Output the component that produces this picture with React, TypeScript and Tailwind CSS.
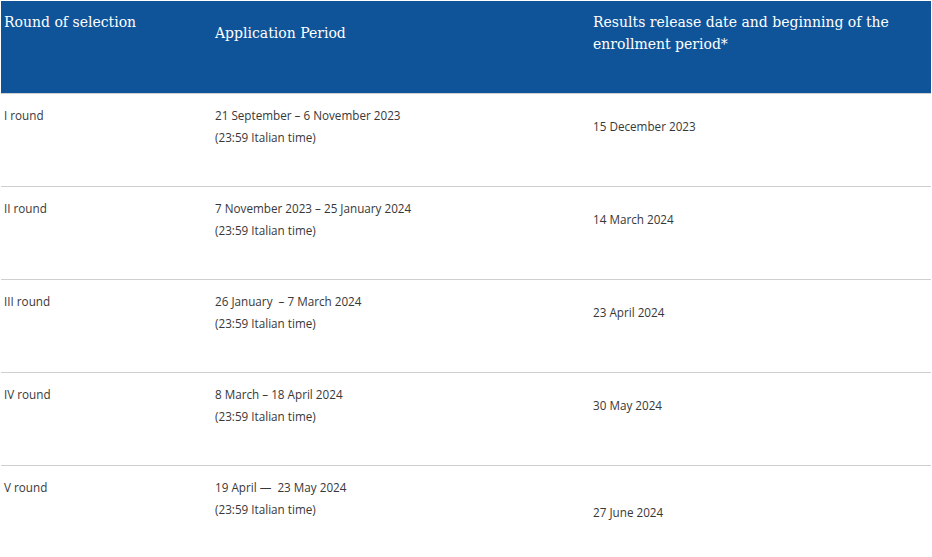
import React from 'react';

interface Round {
  name: string;
  period: string;
  note: string;
  release: string;
}

const rounds: Round[] = [
  { name: 'I round', period: '21 September – 6 November 2023', note: '(23:59 Italian time)', release: '15 December 2023' },
  { name: 'II round', period: '7 November 2023 – 25 January 2024', note: '(23:59 Italian time)', release: '14 March 2024' },
  { name: 'III round', period: '26 January  – 7 March 2024', note: '(23:59 Italian time)', release: '23 April 2024' },
  { name: 'IV round', period: '8 March – 18 April 2024', note: '(23:59 Italian time)', release: '30 May 2024' },
  { name: 'V round', period: '19 April —  23 May 2024', note: '(23:59 Italian time)', release: '27 June 2024' },
];

const serif = { fontFamily: 'Georgia, "DejaVu Serif", serif' };

const App = () => {
  return (
    <div className="bg-white p-px">
      {/* Header */}
      <div
        className="grid h-[93px] grid-cols-[211px_378px_1fr] border-b border-[#cfcfcf] bg-[#0f5499] text-[14px] leading-[22px] text-white"
        style={serif}
      >
        <div className="px-[3px] pt-[10px]">Round of selection</div>
        <div className="px-[3px] pt-[21px]">Application Period</div>
        <div className="pl-[3px] pr-[30px] pt-[10px]">Results release date and beginning of the enrollment period*</div>
      </div>

      {/* Rows */}
      {rounds.map((r, i) => {
        const last = i === rounds.length - 1;
        return (
          <div
            key={r.name}
            className={`grid grid-cols-[211px_378px_1fr] text-[11.7px] leading-[22px] text-[#383838] font-['Open_Sans',sans-serif] ${
              last ? 'h-[90px]' : 'h-[93px] border-b border-[#cfcfcf]'
            }`}
          >
            <div className="px-[3px] pt-[10px]">{r.name}</div>
            <div className="px-[3px] pt-[10px] whitespace-pre">
              <div>{r.period}</div>
              <div>{r.note}</div>
            </div>
            <div className={`px-[3px] ${last ? 'pt-[35px]' : 'pt-[21px]'}`}>{r.release}</div>
          </div>
        );
      })}
    </div>
  );
};

export default App;
